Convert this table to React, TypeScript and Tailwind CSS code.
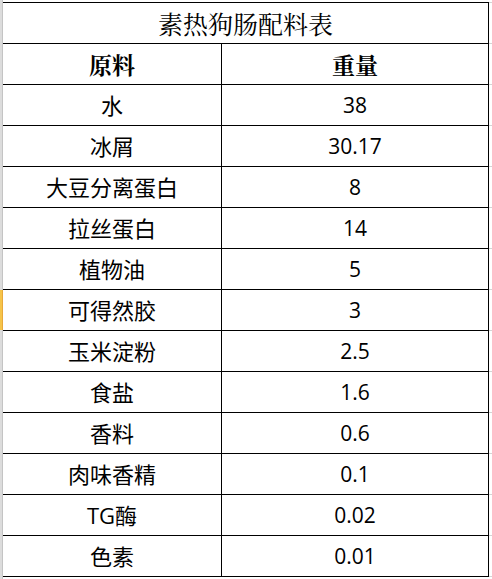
import React from "react";

const rows: [string, string][] = [
  ["水", "38"],
  ["冰屑", "30.17"],
  ["大豆分离蛋白", "8"],
  ["拉丝蛋白", "14"],
  ["植物油", "5"],
  ["可得然胶", "3"],
  ["玉米淀粉", "2.5"],
  ["食盐", "1.6"],
  ["香料", "0.6"],
  ["肉味香精", "0.1"],
  ["TG酶", "0.02"],
  ["色素", "0.01"],
];

const cjk = "font-['Open_Sans','Noto_Sans_CJK_SC',sans-serif]";

export default function App() {
  return (
    <div className="w-[492px] h-[579px] bg-white flex overflow-hidden text-black">
      {/* left row-header strip */}
      <div className="w-[3px] flex flex-col">
        <div className="h-[290px] flex">
          <div className="w-[2px] bg-[#dcdcdc]" />
          <div className="w-[1px] bg-[#c4c4c4]" />
        </div>
        <div className="h-[40px] flex">
          <div className="w-[2px] bg-[#f6c449]" />
          <div className="w-[1px] bg-[#e8a93a]" />
        </div>
        <div className="flex-1 flex">
          <div className="w-[2px] bg-[#dcdcdc]" />
          <div className="w-[1px] bg-[#c4c4c4]" />
        </div>
      </div>

      {/* table */}
      <div className="w-[486px] pt-[2px]">
        <div className="border-r border-black">
          <div className="h-[42px] border-t border-b border-black flex items-center justify-center text-[25px] leading-none font-['Noto_Serif_CJK_SC','Noto_Sans_CJK_SC',serif]">
            素热狗肠配料表
          </div>
          <div className="h-[41px] border-b border-black flex">
            <div className="w-[219px] border-r border-black flex items-center justify-center text-[23px] font-bold leading-none font-['Noto_Serif_CJK_SC','Noto_Sans_CJK_SC',serif]">
              原料
            </div>
            <div className="flex-1 flex items-center justify-center text-[23px] font-bold leading-none font-['Noto_Serif_CJK_SC','Noto_Sans_CJK_SC',serif]">
              重量
            </div>
          </div>
          {rows.map(([name, value]) => (
            <div key={name} className="h-[41px] border-b border-black flex">
              <div className={`w-[219px] border-r border-black flex items-center justify-center text-[22px] leading-none ${cjk}`}>
                {name}
              </div>
              <div className="flex-1 flex items-center justify-center text-[21px] leading-none font-['Open_Sans',sans-serif]">
                {value}
              </div>
            </div>
          ))}
        </div>
      </div>

      {/* right gutter ticks */}
      <div className="w-[3px] pt-[2px] flex flex-col">
        <div className="h-[42px] border-t border-b border-[#d4d4d4]" />
        {Array.from({ length: 13 }).map((_, i) => (
          <div key={i} className="h-[41px] border-b border-[#d4d4d4]" />
        ))}
      </div>
    </div>
  );
}
